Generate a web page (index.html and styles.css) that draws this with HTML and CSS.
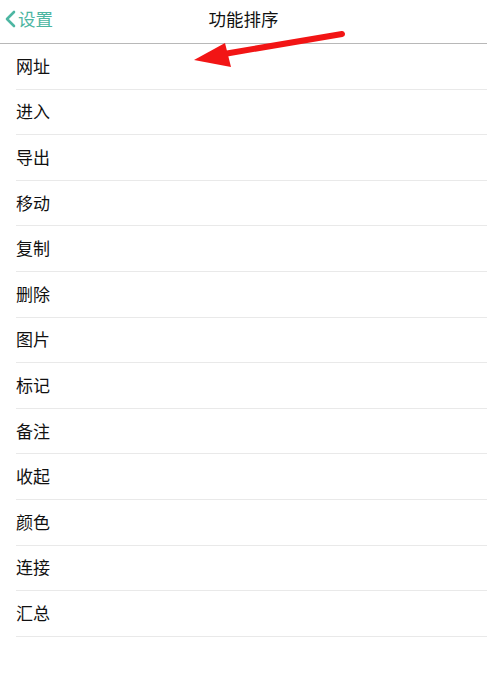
FILE: index.html
```html
<!DOCTYPE html>
<html lang="zh">
<head>
<meta charset="utf-8">
<link rel="stylesheet" href="styles.css">
</head>
<body>
<div class="page">
  <header class="nav">
    <div class="back">
      <svg class="chev" width="12" height="18" viewBox="0 0 12 18"><path d="M10 2 L3 9 L10 16" fill="none" stroke="#4db6a2" stroke-width="2.6" stroke-linecap="round" stroke-linejoin="round"/></svg>
      <span>设置</span>
    </div>
    <div class="title">功能排序</div>
  </header>
  <ul class="list">
    <li>网址</li>
    <li>进入</li>
    <li>导出</li>
    <li>移动</li>
    <li>复制</li>
    <li>删除</li>
    <li>图片</li>
    <li>标记</li>
    <li>备注</li>
    <li>收起</li>
    <li>颜色</li>
    <li>连接</li>
    <li>汇总</li>
  </ul>
  <svg class="arrow" width="487" height="80" viewBox="0 0 487 80">
    <line x1="342" y1="34" x2="224" y2="54" stroke="#f21515" stroke-width="6" stroke-linecap="round"/>
    <polygon points="194,60 225,43 231,67" fill="#f21515"/>
  </svg>
</div>
</body>
</html>
```

FILE: styles.css
```css
html, body {
  margin: 0;
  padding: 0;
  background: #ffffff;
}
body {
  font-family: "Noto Sans CJK SC", "Noto Sans", sans-serif;
  color: #111111;
}
.page {
  position: relative;
  width: 487px;
  height: 677px;
  overflow: hidden;
}
.nav {
  position: relative;
  height: 43px;
  border-bottom: 1px solid #b8b8b8;
  display: flex;
  align-items: center;
  justify-content: center;
}
.back {
  position: absolute;
  left: 4px;
  top: 0;
  height: 37px;
  display: flex;
  align-items: center;
  gap: 2px;
  color: #4db6a2;
  font-size: 17.5px;
}
.chev {
  display: block;
}
.title {
  font-size: 17.5px;
  margin-top: -7px;
  color: #111;
}
.list {
  list-style: none;
  margin: 0;
  padding: 0 0 0 16px;
}
.list li {
  height: 44.6px;
  border-bottom: 1px solid #e9e9e9;
  display: flex;
  align-items: center;
  font-size: 17px;
  line-height: 1;
  padding-bottom: 2px;
  box-sizing: border-box;
  height: 45.6px;
}
.arrow {
  position: absolute;
  left: 0;
  top: 0;
  pointer-events: none;
}
```
